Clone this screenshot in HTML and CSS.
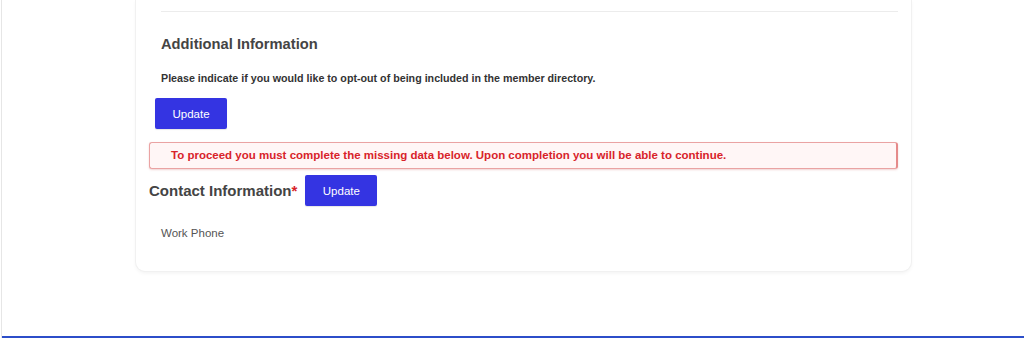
FILE: index.html
```html
<!DOCTYPE html>
<html>
<head>
<meta charset="utf-8">
<link rel="stylesheet" href="styles.css">
</head>
<body>
<div class="page">
  <div class="main">
    <div class="card">
      <hr class="divider">
      <section class="additional">
        <h3 class="section-title">Additional Information</h3>
        <p class="note">Please indicate if you would like to opt-out of being included in the member directory.</p>
        <button class="btn btn-first">Update</button>
      </section>
      <div class="alert">To proceed you must complete the missing data below. Upon completion you will be able to continue.</div>
      <div class="contact-head">
        <h3 class="contact-title">Contact Information<span class="req">*</span></h3>
        <button class="btn">Update</button>
      </div>
      <div class="field">Work Phone</div>
    </div>
  </div>
  <div class="footer-line"></div>
</div>
</body>
</html>
```

FILE: styles.css
```css
html, body {
  margin: 0;
  padding: 0;
  background: #fff;
  font-family: "Liberation Sans", Arial, sans-serif;
}
.page {
  height: 338px;
  display: flex;
  flex-direction: column;
  margin-left: 1px;
  border-left: 1px solid #e6e6e6;
  overflow: hidden;
}
.main {
  flex: 1;
  padding-left: 134px;
}
.card {
  width: 775px;
  box-sizing: border-box;
  height: 271px;
  background: #fff;
  border-radius: 0 0 9px 9px;
  box-shadow: 0 0 0 1px #f1f1f1, 0 2px 4px rgba(0,0,0,0.06);
  padding: 0 13px 0 13px;
  display: flex;
  flex-direction: column;
}
.divider {
  margin: 11px 0 0 12px;
  border: 0;
  border-top: 1px solid #ececec;
  height: 0;
}
.additional {
  padding-left: 6px;
}
.section-title {
  margin: 24px 0 0 6px;
  font-size: 14.7px;
  font-weight: bold;
  color: #444;
  line-height: 16px;
}
.note {
  margin: 20px 0 0 6px;
  font-size: 10.7px;
  font-weight: bold;
  color: #333;
  line-height: 13px;
}
.btn {
  display: block;
  width: 72px;
  height: 31px;
  background: #3434e2;
  color: #fff;
  border: 0;
  border-radius: 2px;
  font-family: "Liberation Sans", Arial, sans-serif;
  font-size: 11.5px;
  padding: 0;
  box-shadow: 0 1px 1px rgba(0,0,0,0.1);
}
.btn-first {
  margin-top: 13px;
}
.alert {
  margin-top: 13px;
  height: 27px;
  box-sizing: border-box;
  background: #fff6f6;
  border: 1px solid #eaa3a3;
  border-right: 2px solid #e58a8a;
  border-radius: 3px;
  box-shadow: 0 1px 2px rgba(200,80,80,0.25);
  color: #d8232a;
  font-size: 11.5px;
  font-weight: bold;
  line-height: 25px;
  padding-left: 21px;
}
.contact-head {
  display: flex;
  align-items: center;
  gap: 8px;
  margin-top: 6px;
}
.contact-title {
  margin: 0;
  font-size: 15px;
  font-weight: bold;
  color: #444;
}
.req {
  color: #d8232a;
}
.field {
  margin: 20px 0 0 12px;
  font-size: 11.5px;
  color: #555;
  line-height: 14px;
}
.footer-line {
  height: 2px;
  background: #2c4ec9;
}
```
